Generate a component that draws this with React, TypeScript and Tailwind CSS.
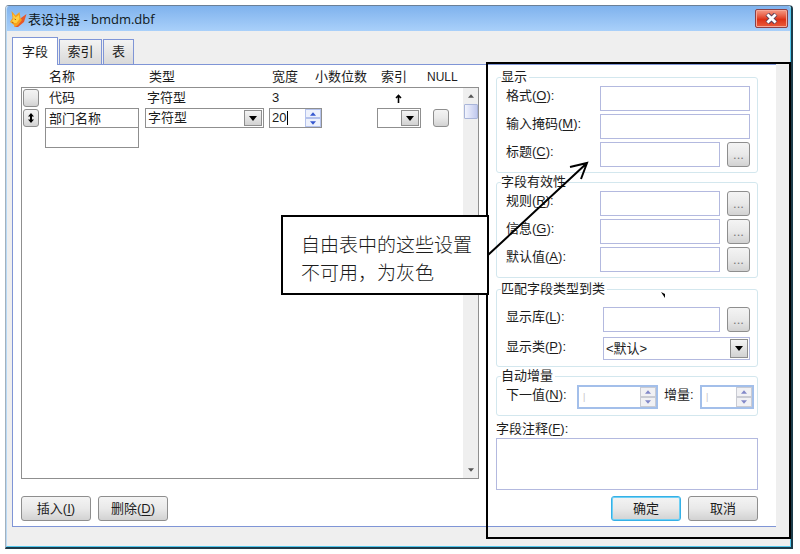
import type { ReactNode } from "react";

function cn(...classes: (string | false | undefined)[]) {
  return classes.filter(Boolean).join(" ");
}

const TABS = ["字段", "索引", "表"];

const BTN_FACE =
  "rounded-[3px] border border-[#8e8e8e] bg-linear-to-b from-[#f4f4f4] via-[#e9e9e9] to-[#d2d2d2]";
const FIELD = "border border-[#b3b9df] bg-white px-1 outline-none";

// "格式", "O" -> 格式(O): with the access key underlined
function Mnemonic({ text, k, colon = true }: { text: string; k: string; colon?: boolean }) {
  return (
    <>
      {text}(<span className="underline underline-offset-2">{k}</span>){colon && ":"}
    </>
  );
}

function Triangle({ up, className }: { up?: boolean; className?: string }) {
  return (
    <svg viewBox="0 0 10 6" className={className} fill="currentColor" aria-hidden="true">
      <path d={up ? "M0 6 5 0l5 6z" : "M0 0h10L5 6z"} />
    </svg>
  );
}

function PushButton({ children, primary }: { children: ReactNode; primary?: boolean }) {
  return (
    <button
      type="button"
      className={cn(
        BTN_FACE,
        "h-[25px] w-[70px] whitespace-nowrap",
        primary && "border-[#35b0e6] shadow-[inset_0_0_0_1px_#6fd0f5]",
      )}
    >
      {children}
    </button>
  );
}

function Select({ label, id, value, className }: { label?: string; id?: string; value: string; className?: string }) {
  return (
    <div className={cn("relative flex", className)}>
      <select
        id={id}
        aria-label={label}
        defaultValue={value}
        className="w-full appearance-none bg-transparent pl-[2px] outline-none"
      >
        <option value={value}>{value}</option>
      </select>
      <span
        className="pointer-events-none absolute inset-y-px right-px flex w-[18px] items-center justify-center border border-[#8e8e8e] bg-linear-to-b from-[#f4f4f4] to-[#d2d2d2]"
      >
        <Triangle className="h-[5px] w-2 text-black" />
      </span>
    </div>
  );
}

function Stepper({ muted }: { muted?: boolean }) {
  const btn = cn(
    "flex flex-1 items-center justify-center border",
    muted ? "border-[#c9cbd3] bg-[#f1f1f4] text-[#8288c8]" : "border-[#b4c2ec] bg-[#edf1fc] text-[#3557cf]",
  );
  return (
    <span className="flex w-4 shrink-0 flex-col">
      <button type="button" aria-label="增加" className={btn}>
        <Triangle up className="h-1 w-[6px]" />
      </button>
      <button type="button" aria-label="减少" className={btn}>
        <Triangle className="h-1 w-[6px]" />
      </button>
    </span>
  );
}

function AutoIncSpinner({ id, className }: { id: string; className?: string }) {
  return (
    <div className={cn("flex h-6 border-2 border-[#a3bfea] bg-white", className)}>
      <input
        id={id}
        defaultValue="|"
        className="min-w-0 flex-1 bg-transparent pl-1 text-[9px] text-[#c4c4c4] outline-none"
      />
      <Stepper muted />
    </div>
  );
}

function Group({ title, children }: { title: string; children: ReactNode }) {
  return (
    <fieldset className="min-w-0 rounded-[3px] border border-[#d3e7ee] pr-[7px] pl-1">
      <legend className="h-[18px] pr-[2px] leading-[18px]">{title}</legend>
      {children}
    </fieldset>
  );
}

type RowProps = { id: string; text: string; k: string; browse?: boolean; wide?: boolean };

function FieldRow({ id, text, k, browse, wide }: RowProps) {
  return (
    <div className="flex h-[25px] items-stretch pl-[5px]">
      <label htmlFor={id} className={cn("shrink-0 leading-5", wide ? "w-[97px]" : "w-[94px]")}>
        <Mnemonic text={text} k={k} />
      </label>
      <input id={id} className={cn(FIELD, "min-w-0 flex-1")} />
      {browse && (
        <button
          type="button"
          aria-label={`浏览${text}`}
          className={cn(BTN_FACE, "ml-[7px] w-[23px] shrink-0 text-[#7a7a7a]")}
        >
          ...
        </button>
      )}
    </div>
  );
}

function FoxIcon() {
  return (
    <svg viewBox="0 0 18 18" className="h-[18px] w-[18px]" aria-hidden="true">
      <path d="M12 8 17.500 4 15 12l-6 5H5l5-4z" fill="#e8582a" />
      <path d="M2.500 1 6.500 5.500l4-3.500 1 6 1.500 2-4 5-3 2-1.500-2.500L1 12l2.500-4z" fill="#f7a11d" />
      <path d="M4 4l2.500 3.500L10 5l.5 4-3 4L5 13l-2.500-1.500L4.500 9z" fill="#ffd044" />
      <path d="m5.500 9 1.500.7M3 12l1.500.8" stroke="#a8520c" strokeWidth=".9" />
    </svg>
  );
}

function TitleBar() {
  return (
    <header className="flex h-[25px] items-center bg-linear-to-b from-[#7fb2ed] to-[#a9d0fa] pr-[2px] pl-[2px]">
      <FoxIcon />
      <h1 className="flex-1 pl-px font-['Open_Sans','Noto_Sans_CJK_SC',sans-serif] text-[13px] text-[#101820]">
        表设计器 - bmdm.dbf
      </h1>
      <button
        type="button"
        aria-label="关闭"
        className="flex h-[19px] w-[33px] items-center justify-center rounded-[2px] border border-[#8c3f45] bg-linear-to-b from-[#f59a86] from-0% via-[#dd3014] via-55% to-[#ea5a3a] shadow-[inset_0_0_0_1px_#f6a898]"
      >
        <svg viewBox="0 0 12 10" className="h-[11px] w-[13px]" aria-hidden="true">
          <path d="m2 1 8 8M10 1 2 9" stroke="#5d3f56" strokeWidth="4.400" />
          <path d="m2.200 1.200 7.600 7.600M9.800 1.200 2.200 8.800" stroke="#fff" strokeWidth="2.600" />
        </svg>
      </button>
    </header>
  );
}

function TabStrip() {
  return (
    <div role="tablist" className="flex items-end gap-px">
      {TABS.map((tab, i) => (
        <button
          key={tab}
          type="button"
          role="tab"
          aria-selected={i === 0}
          className={cn(
            "border border-b-0 border-[#7f95d6]",
            i === 0
              ? "relative -mb-px h-[28px] w-[46px] bg-white"
              : "h-[25px] bg-linear-to-b from-[#f3f3f3] to-[#d9d9d9]",
            i === 1 && "w-[43px]",
            i === 2 && "w-[31px]",
          )}
        >
          {tab}
        </button>
      ))}
    </div>
  );
}

function FieldTable() {
  return (
    // the header row sits above the frame, so the table is pulled up out of it
    <div className="mt-[22px] flex flex-1 border border-[#8f8f8f]">
      <div className="min-w-0 flex-1">
        <table className="-mt-[21px] w-full table-fixed border-collapse whitespace-nowrap">
          <colgroup>
            <col className="w-[23px]" />
            <col className="w-[100px]" />
            <col className="w-[124px]" />
            <col className="w-[46px]" />
            <col className="w-[62px]" />
            <col className="w-[50px]" />
            <col className="w-[36px]" />
          </colgroup>
          <thead>
            <tr className="h-[21px] text-left [&>th]:p-0 [&>th]:pb-[2px] [&>th]:font-normal">
              <th />
              <th><span className="pl-1">名称</span></th>
              <th><span className="pl-1">类型</span></th>
              <th><span className="pl-[3px]">宽度</span></th>
              <th>小数位数</th>
              <th><span className="pl-1">索引</span></th>
              <th className="text-xs">NULL</th>
            </tr>
          </thead>
          <tbody className="[&_td]:p-0">
            <tr className="h-5">
              <td>
                <button type="button" aria-label="选择代码" className={cn(BTN_FACE, "ml-px block h-[18px] w-4")} />
              </td>
              <td><span className="pl-1">代码</span></td>
              <td><span className="pl-[2px]">字符型</span></td>
              <td><span className="pl-[3px]">3</span></td>
              <td />
              <td>
                <svg viewBox="0 0 7 9" className="ml-[18px] h-[9px] w-[7px]" aria-label="升序">
                  <path d="M3.500 9V2M1 4l2.500-2.500L6 4" fill="none" stroke="#000" strokeWidth="1.600" />
                </svg>
              </td>
              <td />
            </tr>
            <tr className="h-5">
              <td>
                <button
                  type="button"
                  aria-label="移动部门名称"
                  className={cn(BTN_FACE, "ml-px flex h-[18px] w-4 items-center justify-center")}
                >
                  <svg viewBox="0 0 6 10" className="h-[10px] w-[6px]" aria-hidden="true">
                    <path d="m3 0 3 3.500H4v3h2L3 10 0 6.500h2v-3H0z" />
                  </svg>
                </button>
              </td>
              <td>
                <input
                  aria-label="名称"
                  defaultValue="部门名称"
                  className="block h-5 w-[94px] border border-[#8f8f8f] px-[3px] pb-[2px] outline-none"
                />
              </td>
              <td>
                <Select label="类型" value="字符型" className="h-5 w-[119px] border border-[#8f8f8f]" />
              </td>
              <td>
                <div className="flex h-5 w-[53px] border border-[#8f8f8f]">
                  <input
                    aria-label="宽度"
                    defaultValue="20"
                    className="w-[17px] bg-transparent pl-[2px] outline-none"
                  />
                  <span className="my-[2px] mr-auto w-px bg-black" />
                  <Stepper />
                </div>
              </td>
              <td />
              <td>
                <Select label="索引" value="" className="h-5 w-11 border border-[#8f8f8f]" />
              </td>
              <td>
                <input
                  type="checkbox"
                  aria-label="NULL"
                  className={cn(BTN_FACE, "ml-[6px] block h-[18px] w-4 appearance-none")}
                />
              </td>
            </tr>
            <tr className="h-5">
              <td />
              <td>
                <input
                  aria-label="新字段名称"
                  className="block h-5 w-[94px] border border-t-0 border-[#8f8f8f] px-[3px] outline-none"
                />
              </td>
              <td colSpan={5} />
            </tr>
          </tbody>
        </table>
      </div>

      {/* Scrollbar */}
      <div className="flex w-[15px] shrink-0 flex-col items-center bg-[#efefef]">
        <Triangle up className="mt-[6px] h-1 w-[6px] text-[#555]" />
        <span className="mt-[6px] h-[15px] w-[14px] rounded-[1px] border border-[#a9b5d9] bg-linear-to-r from-[#f2f4fd] to-[#c1c9ee]" />
        <Triangle className="mt-auto mb-[6px] h-1 w-[6px] text-[#555]" />
      </div>
    </div>
  );
}

function Properties() {
  return (
    <div className="flex w-[262px] shrink-0 flex-col pt-[3px]">
      <Group title="显示">
        <div className="flex flex-col gap-[3px] pb-[5px]">
          <FieldRow id="format" text="格式" k="O" />
          <FieldRow id="mask" text="输入掩码" k="M" />
          <FieldRow id="caption" text="标题" k="C" browse />
        </div>
      </Group>
      <Group title="字段有效性">
        <div className="flex flex-col gap-[3px] pb-[5px]">
          <FieldRow id="rule" text="规则" k="R" browse />
          <FieldRow id="message" text="信息" k="G" browse />
          <FieldRow id="default" text="默认值" k="A" browse />
        </div>
      </Group>
      <div className="h-[2px]" />
      <Group title="匹配字段类型到类">
        <div className="flex flex-col gap-[5px] pt-[9px] pb-[6px]">
          <FieldRow id="library" text="显示库" k="L" browse wide />
          <div className="flex h-[23px] pl-[5px]">
            <label htmlFor="class" className="w-[97px] shrink-0 leading-5">
              <Mnemonic text="显示类" k="P" />
            </label>
            <Select id="class" value="<默认>" className="flex-1 border border-[#b3b9df]" />
          </div>
        </div>
      </Group>
      <Group title="自动增量">
        <div className="flex pb-[6px] pl-[5px]">
          <label htmlFor="next" className="w-[71px] shrink-0 leading-5">
            <Mnemonic text="下一值" k="N" />
          </label>
          <AutoIncSpinner id="next" className="w-[81px]" />
          <label htmlFor="step" className="flex-1 pl-[6px] leading-5">增量:</label>
          <AutoIncSpinner id="step" className="-mr-1 w-[54px]" />
        </div>
      </Group>
      <label htmlFor="comment" className="mt-1 leading-[18px]">
        <Mnemonic text="字段注释" k="F" />
      </label>
      <textarea id="comment" className={cn(FIELD, "h-[52px] resize-none")} />
      <div className="mt-[6px] mb-[5px] flex justify-end gap-[7px]">
        <PushButton primary>确定</PushButton>
        <PushButton>取消</PushButton>
      </div>
    </div>
  );
}

/* Teaching annotation drawn on top of the dialog */
function Annotation() {
  return (
    <>
      <div className="pointer-events-none absolute top-[56px] right-0 bottom-[8px] w-[305px] border-2 border-black" />
      <svg
        viewBox="0 0 106 98"
        className="pointer-events-none absolute top-[152px] right-[199px] h-[98px] w-[106px]"
        fill="none"
        stroke="#000"
        strokeWidth="2"
        aria-hidden="true"
      >
        <path d="M2 97 101 5M84 9l17-4-6 16" />
      </svg>
      <svg
        viewBox="0 0 5 6"
        className="pointer-events-none absolute top-[286px] right-[125px] h-[6px] w-[5px]"
        aria-hidden="true"
      >
        <path d="M0 0 4 2v4z" />
      </svg>
      <p className="absolute top-[209px] right-[302px] w-[208px] border-2 border-black bg-white pt-[13px] pb-[7px] pl-[18px] font-['Noto_Sans_CJK_SC',serif] text-[19px] leading-7 font-light whitespace-nowrap">
        自由表中的这些设置
        <br />
        不可用，为灰色
      </p>
    </>
  );
}

export default function App() {
  return (
    <main className="bg-white pt-[5px] pr-[7px] pb-[6px] pl-[5px] font-['Liberation_Sans','Noto_Sans_CJK_SC',sans-serif] text-[13px] leading-[18px] text-[#1c1c1c]">
      <div className="relative rounded-t-[4px] border-t border-r-2 border-b-2 border-l border-t-[#6a7f96] border-r-[#1d3c4a] border-b-[#1d3c4a] border-l-[#a3b1bd]">
        <div className="overflow-hidden rounded-t-[3px] border-r border-b border-l border-r-[#55c8ee] border-b-[#55c8ee] border-l-[#b9d9f5] bg-[#efefef]">
          <TitleBar />
          <div className="pt-[6px] pr-[14px] pb-[19px] pl-[5px]">
            <TabStrip />
            <div className="flex border-y border-l border-[#7f95d6] bg-white pr-[18px] pl-2">
              <div className="mr-[17px] flex min-w-0 flex-1 flex-col">
                <FieldTable />
                <div className="mt-[17px] mb-[5px] flex gap-[7px]">
                  <PushButton><Mnemonic text="插入" k="I" colon={false} /></PushButton>
                  <PushButton><Mnemonic text="删除" k="D" colon={false} /></PushButton>
                </div>
              </div>
              <Properties />
            </div>
          </div>
        </div>
        <Annotation />
      </div>
    </main>
  );
}
